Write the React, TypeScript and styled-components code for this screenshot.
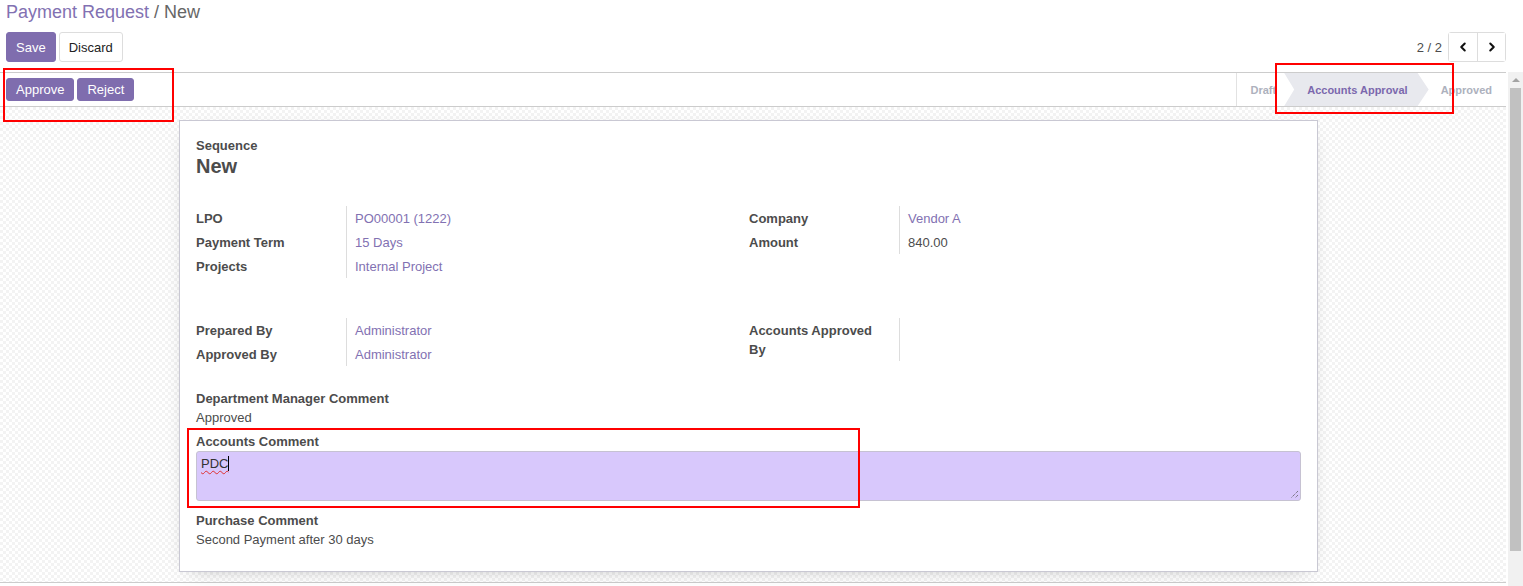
import styled, { createGlobalStyle } from 'styled-components';
import { ChevronLeft, ChevronRight } from 'lucide-react';

const GlobalStyle = createGlobalStyle`
  html, body {
    margin: 0;
    padding: 0;
    overflow: hidden;
  }
  body {
    font-family: "Liberation Sans", Arial, sans-serif;
    font-size: 13px;
    color: #4c4c4c;
    background: #fff;
  }
  * {
    box-sizing: border-box;
  }
`;

const brand = '#7f6dae';
const link = '#8271b2';

const Page = styled.div`
  position: relative;
  width: 1523px;
  height: 586px;
  display: flex;
  flex-direction: column;
`;

const ControlPanel = styled.div`
  display: flex;
  flex-direction: column;
  padding: 1px 17px 10px 6px;
  height: 72px;
`;

const Breadcrumb = styled.div`
  font-size: 18px;
  line-height: 22px;
  color: #666;
  white-space: nowrap;
`;

const Crumb = styled.span`
  color: ${link};
`;

const ActionsRow = styled.div`
  display: flex;
  align-items: center;
  justify-content: space-between;
  margin-top: 9px;
`;

const ButtonGroup = styled.div`
  display: flex;
  gap: 3px;
`;

const Button = styled.button<{ $primary?: boolean; $small?: boolean }>`
  font-family: inherit;
  font-size: 13px;
  height: ${(p) => (p.$small ? '23px' : '30px')};
  padding: 0 9px;
  border-radius: 3px;
  border: 1px solid ${(p) => (p.$primary ? brand : '#ddd')};
  background: ${(p) => (p.$primary ? brand : '#fff')};
  color: ${(p) => (p.$primary ? '#fff' : '#222')};
  cursor: pointer;
`;

const Pager = styled.div`
  display: flex;
  align-items: center;
  gap: 6px;
`;

const PagerValue = styled.span`
  color: #4c4c4c;
  font-size: 13px;
`;

const PagerButtons = styled.div`
  display: flex;
  border: 1px solid #ddd;
  border-radius: 3px;
  height: 30px;
`;

const PagerButton = styled.button`
  width: 28px;
  border: none;
  background: #fff;
  display: flex;
  align-items: center;
  justify-content: center;
  padding: 0;
  color: #111;
  & + & {
    border-left: 1px solid #ddd;
  }
`;

const Body = styled.div`
  flex: 1;
  display: flex;
  min-height: 0;
`;

const Main = styled.div`
  flex: 1;
  display: flex;
  flex-direction: column;
  padding-right: 2px;
`;

const StatusBar = styled.div`
  display: flex;
  align-items: center;
  justify-content: space-between;
  height: 35px;
  border-top: 1px solid #ccc;
  border-bottom: 1px solid #ccc;
  padding-left: 6px;
`;

const Steps = styled.div`
  display: flex;
  align-self: stretch;
  border-left: 1px solid #e2e2e2;
`;

const Step = styled.div<{ $active?: boolean }>`
  display: flex;
  align-items: center;
  font-size: 11px;
  font-weight: 700;
  white-space: nowrap;
  color: ${(p) => (p.$active ? '#7b68ad' : '#adb1bd')};
  background: ${(p) => (p.$active ? '#e8e9ee' : 'transparent')};
  clip-path: ${(p) =>
    p.$active
      ? 'polygon(0 0, calc(100% - 11px) 0, 100% 50%, calc(100% - 11px) 100%, 0 100%, 10px 50%)'
      : 'none'};
`;

const DraftStep = styled(Step)`
  padding: 0 8px 0 14px;
`;

const ActiveStep = styled(Step)`
  padding: 0 21px 0 23px;
`;

const LastStep = styled(Step)`
  padding: 0 14px 0 12px;
`;

const SheetBg = styled.div`
  flex: 1;
  min-height: 0;
  background-color: #fff;
  background-image: conic-gradient(#f3f3f3 25%, transparent 0 50%, #f3f3f3 0 75%, transparent 0);
  background-size: 6px 6px;
  border-bottom: 1px solid #ccc;
  margin-bottom: 3px;
  padding: 13px 0 12px 179px;
`;

const Sheet = styled.div`
  width: 1139px;
  background: #fff;
  border: 1px solid #c9c8d3;
  box-shadow: 0 5px 20px -12px rgba(0, 0, 0, 0.4);
  padding: 15px 16px 22px;
`;

const FieldLabel = styled.div`
  font-weight: 700;
  line-height: 19px;
  color: #4c4c4c;
`;

const Title = styled.div`
  font-size: 20px;
  font-weight: 700;
  line-height: 22px;
  color: #4c4c4c;
`;

const GroupRow = styled.div<{ $top: number }>`
  display: grid;
  grid-template-columns: 553px 1fr;
  margin-top: ${(p) => p.$top}px;
`;

const InnerGroup = styled.div`
  display: grid;
  grid-template-columns: 150px 1fr;
  align-content: start;
`;

const CellLabel = styled.div`
  font-weight: 700;
  line-height: 19px;
  padding: 2.5px 10px 2.5px 0;
`;

const CellValue = styled.div<{ $link?: boolean }>`
  line-height: 19px;
  padding: 2.5px 0 2.5px 8px;
  border-left: 1px solid #ddd;
  color: ${(p) => (p.$link ? link : '#4c4c4c')};
`;

const Block = styled.div<{ $top: number }>`
  margin-top: ${(p) => p.$top}px;
`;

const Text = styled.div`
  line-height: 19px;
`;

const TextArea = styled.div`
  position: relative;
  height: 50px;
  background: #d8c8fc;
  border: 1px solid #c6c2d2;
  border-radius: 3px;
  padding: 2px 4px;
  line-height: 19px;
  color: #333;
`;

const Misspelled = styled.span`
  text-decoration: underline wavy #e03030;
  text-decoration-thickness: 1px;
  text-underline-offset: 2px;
`;

const Caret = styled.span`
  display: inline-block;
  width: 1px;
  height: 15px;
  background: #000;
  vertical-align: -3px;
`;

const Grip = styled.svg`
  position: absolute;
  right: 1px;
  bottom: 1px;
`;

const Scrollbar = styled.div`
  width: 15px;
  background: #f1f1f1;
  display: flex;
  flex-direction: column;
  align-items: center;
  padding-top: 6px;
`;

const ScrollArrow = styled.div`
  width: 0;
  height: 0;
  border-left: 4px solid transparent;
  border-right: 4px solid transparent;
  border-bottom: 4px solid #a3a3a3;
`;

const Thumb = styled.div`
  width: 11px;
  height: 463px;
  margin-top: 6px;
  background: #c1c1c1;
`;

const Annotation = styled.div<{ $l: number; $t: number; $w: number; $h: number }>`
  position: absolute;
  left: ${(p) => p.$l}px;
  top: ${(p) => p.$t}px;
  width: ${(p) => p.$w}px;
  height: ${(p) => p.$h}px;
  border: 2px solid #f00;
  pointer-events: none;
`;

type Field = { label: string; value: string; link: boolean };

const topFields: Field[] = [
  { label: 'LPO', value: 'PO00001 (1222)', link: true },
  { label: 'Payment Term', value: '15 Days', link: true },
  { label: 'Projects', value: 'Internal Project', link: true },
];

const topRight: Field[] = [
  { label: 'Company', value: 'Vendor A', link: true },
  { label: 'Amount', value: '840.00', link: false },
];

const people: Field[] = [
  { label: 'Prepared By', value: 'Administrator', link: true },
  { label: 'Approved By', value: 'Administrator', link: true },
];

const approvers: Field[] = [{ label: 'Accounts Approved By', value: '', link: false }];

function Fields({ items }: { items: Field[] }) {
  return (
    <InnerGroup>
      {items.flatMap((f) => [
        <CellLabel key={f.label}>{f.label}</CellLabel>,
        <CellValue key={f.label + '-v'} $link={f.link}>
          {f.value || '\u00a0'}
        </CellValue>,
      ])}
    </InnerGroup>
  );
}

export default function App() {
  return (
    <Page>
      <GlobalStyle />
      <ControlPanel>
        <Breadcrumb>
          <Crumb>Payment Request</Crumb> / New
        </Breadcrumb>
        <ActionsRow>
          <ButtonGroup>
            <Button $primary>Save</Button>
            <Button>Discard</Button>
          </ButtonGroup>
          <Pager>
            <PagerValue>2 / 2</PagerValue>
            <PagerButtons>
              <PagerButton>
                <ChevronLeft size={14} strokeWidth={3.5} />
              </PagerButton>
              <PagerButton>
                <ChevronRight size={14} strokeWidth={3.5} />
              </PagerButton>
            </PagerButtons>
          </Pager>
        </ActionsRow>
      </ControlPanel>

      <Body>
        <Main>
          <StatusBar>
            <ButtonGroup>
              <Button $primary $small>Approve</Button>
              <Button $primary $small>Reject</Button>
            </ButtonGroup>
            <Steps>
              <DraftStep>Draft</DraftStep>
              <ActiveStep $active>Accounts Approval</ActiveStep>
              <LastStep>Approved</LastStep>
            </Steps>
          </StatusBar>

          <SheetBg>
            <Sheet>
              <FieldLabel>Sequence</FieldLabel>
              <Title>New</Title>

              <GroupRow $top={29}>
                <Fields items={topFields} />
                <Fields items={topRight} />
              </GroupRow>

              <GroupRow $top={40}>
                <Fields items={people} />
                <Fields items={approvers} />
              </GroupRow>

              <Block $top={23}>
                <FieldLabel>Department Manager Comment</FieldLabel>
                <Text>Approved</Text>
              </Block>

              <Block $top={5}>
                <FieldLabel>Accounts Comment</FieldLabel>
                <TextArea>
                  <Misspelled>PDC</Misspelled>
                  <Caret />
                  <Grip width="10" height="10" viewBox="0 0 10 10">
                    <path d="M9 2 L2 9 M9 6 L6 9" stroke="#555" strokeWidth="1" strokeDasharray="1 1" />
                  </Grip>
                </TextArea>
              </Block>

              <Block $top={10}>
                <FieldLabel>Purchase Comment</FieldLabel>
                <Text>Second Payment after 30 days</Text>
              </Block>
            </Sheet>
          </SheetBg>
        </Main>
        <Scrollbar>
          <ScrollArrow />
          <Thumb />
        </Scrollbar>
      </Body>

      <Annotation $l={3} $t={68} $w={171} $h={54} />
      <Annotation $l={1275} $t={63} $w={179} $h={51} />
      <Annotation $l={187} $t={428} $w={673} $h={80} />
    </Page>
  );
}
